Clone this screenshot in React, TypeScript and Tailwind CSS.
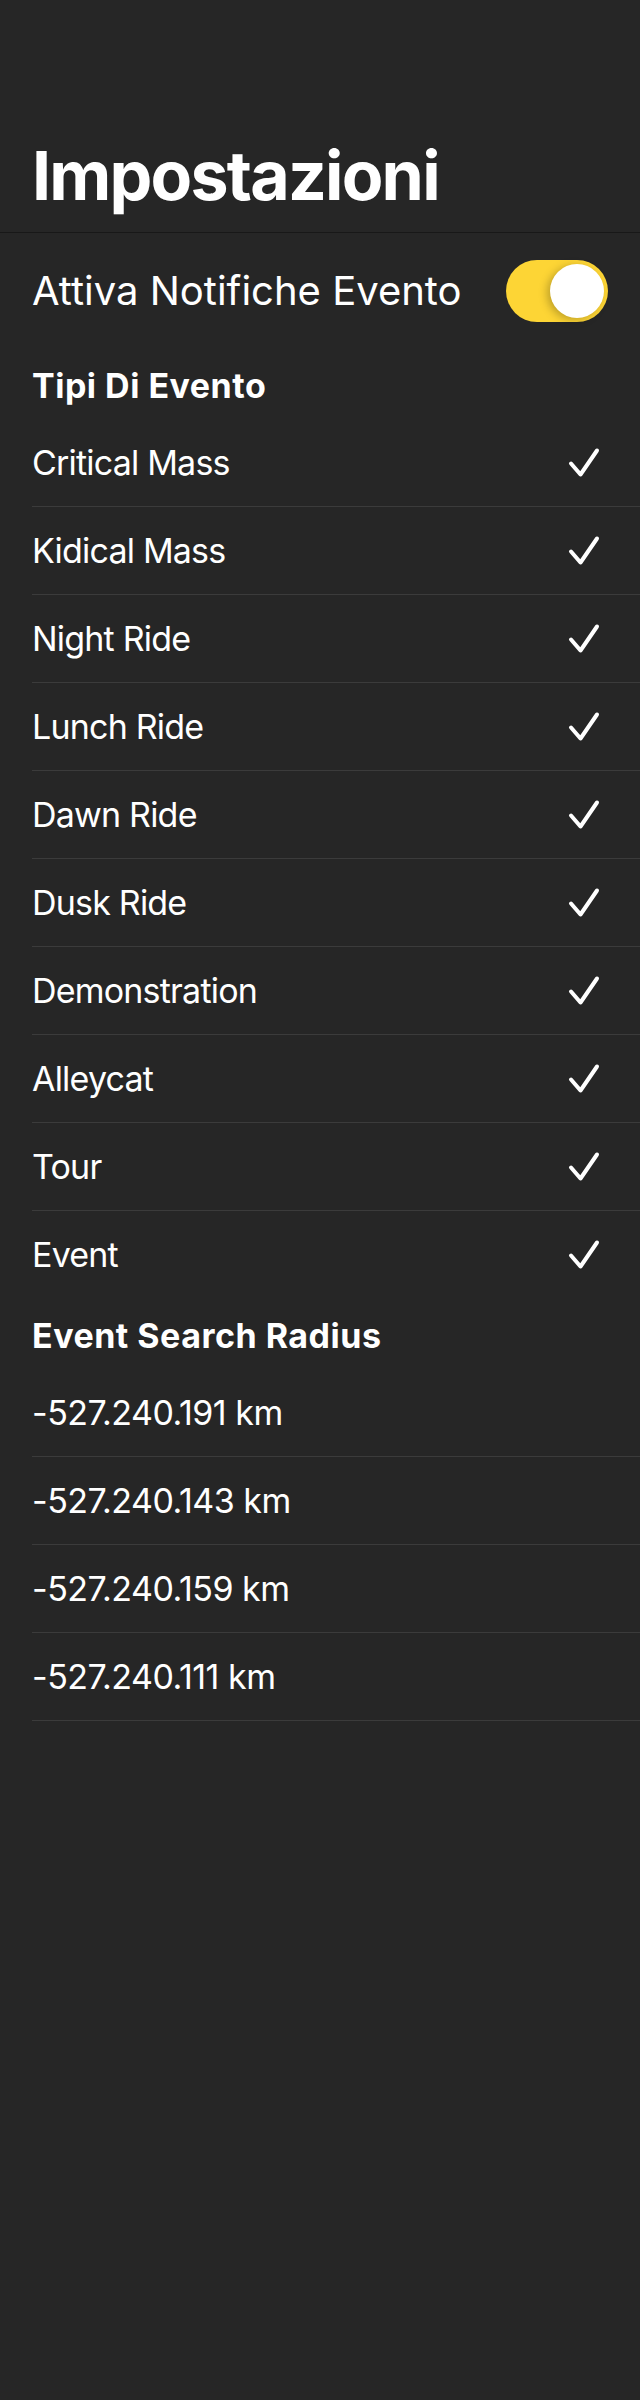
import React, { useState } from 'react';

const eventTypes = [
  'Critical Mass',
  'Kidical Mass',
  'Night Ride',
  'Lunch Ride',
  'Dawn Ride',
  'Dusk Ride',
  'Demonstration',
  'Alleycat',
  'Tour',
  'Event',
];

const radii = ['-527.240.191 km', '-527.240.143 km', '-527.240.159 km', '-527.240.111 km'];

function Check() {
  return (
    <svg width="32" height="32" viewBox="0 0 32 32" fill="none">
      <path
        d="M3 16.5 L12.5 27.5 L29 3.5"
        stroke="white"
        strokeWidth="4"
        strokeLinecap="round"
        strokeLinejoin="round"
      />
    </svg>
  );
}

function SectionHeader({ title }: { title: string }) {
  return (
    <div className="px-[32px] pt-[17px] pb-[13px] text-[34px] leading-[40px] font-bold tracking-[0.5px] text-white">
      {title}
    </div>
  );
}

export default function App() {
  const [enabled, setEnabled] = useState(true);
  const [selected, setSelected] = useState<string[]>(eventTypes);

  const toggleType = (t: string) => {
    setSelected(prev => (prev.includes(t) ? prev.filter(x => x !== t) : [...prev, t]));
  };

  return (
    <div
      className="min-h-[2400px] w-[640px] bg-[#262626] text-white"
      style={{ fontFamily: 'Inter, "Noto Sans", sans-serif' }}
    >
      {/* Nav bar with large title */}
      <div className="h-[233px] border-b border-[#181818] px-[32px] pt-[135px]">
        <h1 className="text-[68px] leading-[80px] font-bold tracking-[-1.8px]">Impostazioni</h1>
      </div>

      {/* Notifications toggle */}
      <div className="flex h-[116px] items-center justify-between pl-[32px] pr-[32px]">
        <span className="text-[40px] leading-[48px]">Attiva Notifiche Evento</span>
        <button
          onClick={() => setEnabled(!enabled)}
          className={`flex h-[62px] w-[102px] items-center rounded-full p-[4px] ${
            enabled ? 'justify-end bg-[#fdd535]' : 'justify-start bg-[#3a3a3c]'
          }`}
        >
          <span className="h-[54px] w-[54px] rounded-full bg-white shadow-[-3px_2px_8px_rgba(0,0,0,0.25)]" />
        </button>
      </div>

      <SectionHeader title="Tipi Di Evento" />
      <div>
        {eventTypes.map((t, i) => (
          <div key={t} className="pl-[32px]" onClick={() => toggleType(t)}>
            <div
              className={`flex h-[88px] items-center justify-between pr-[40px] ${
                i < eventTypes.length - 1 ? 'border-b border-[#3b3b3b]' : ''
              }`}
            >
              <span className="text-[34px] leading-[40px] tracking-[-0.8px]">{t}</span>
              {selected.includes(t) && <Check />}
            </div>
          </div>
        ))}
      </div>

      <SectionHeader title="Event Search Radius" />
      <div>
        {radii.map(r => (
          <div key={r} className="pl-[32px]">
            <div className="flex h-[88px] items-center border-b border-[#3b3b3b]">
              <span className="text-[34px] leading-[40px] tracking-[-0.5px]">{r}</span>
            </div>
          </div>
        ))}
      </div>
    </div>
  );
}
